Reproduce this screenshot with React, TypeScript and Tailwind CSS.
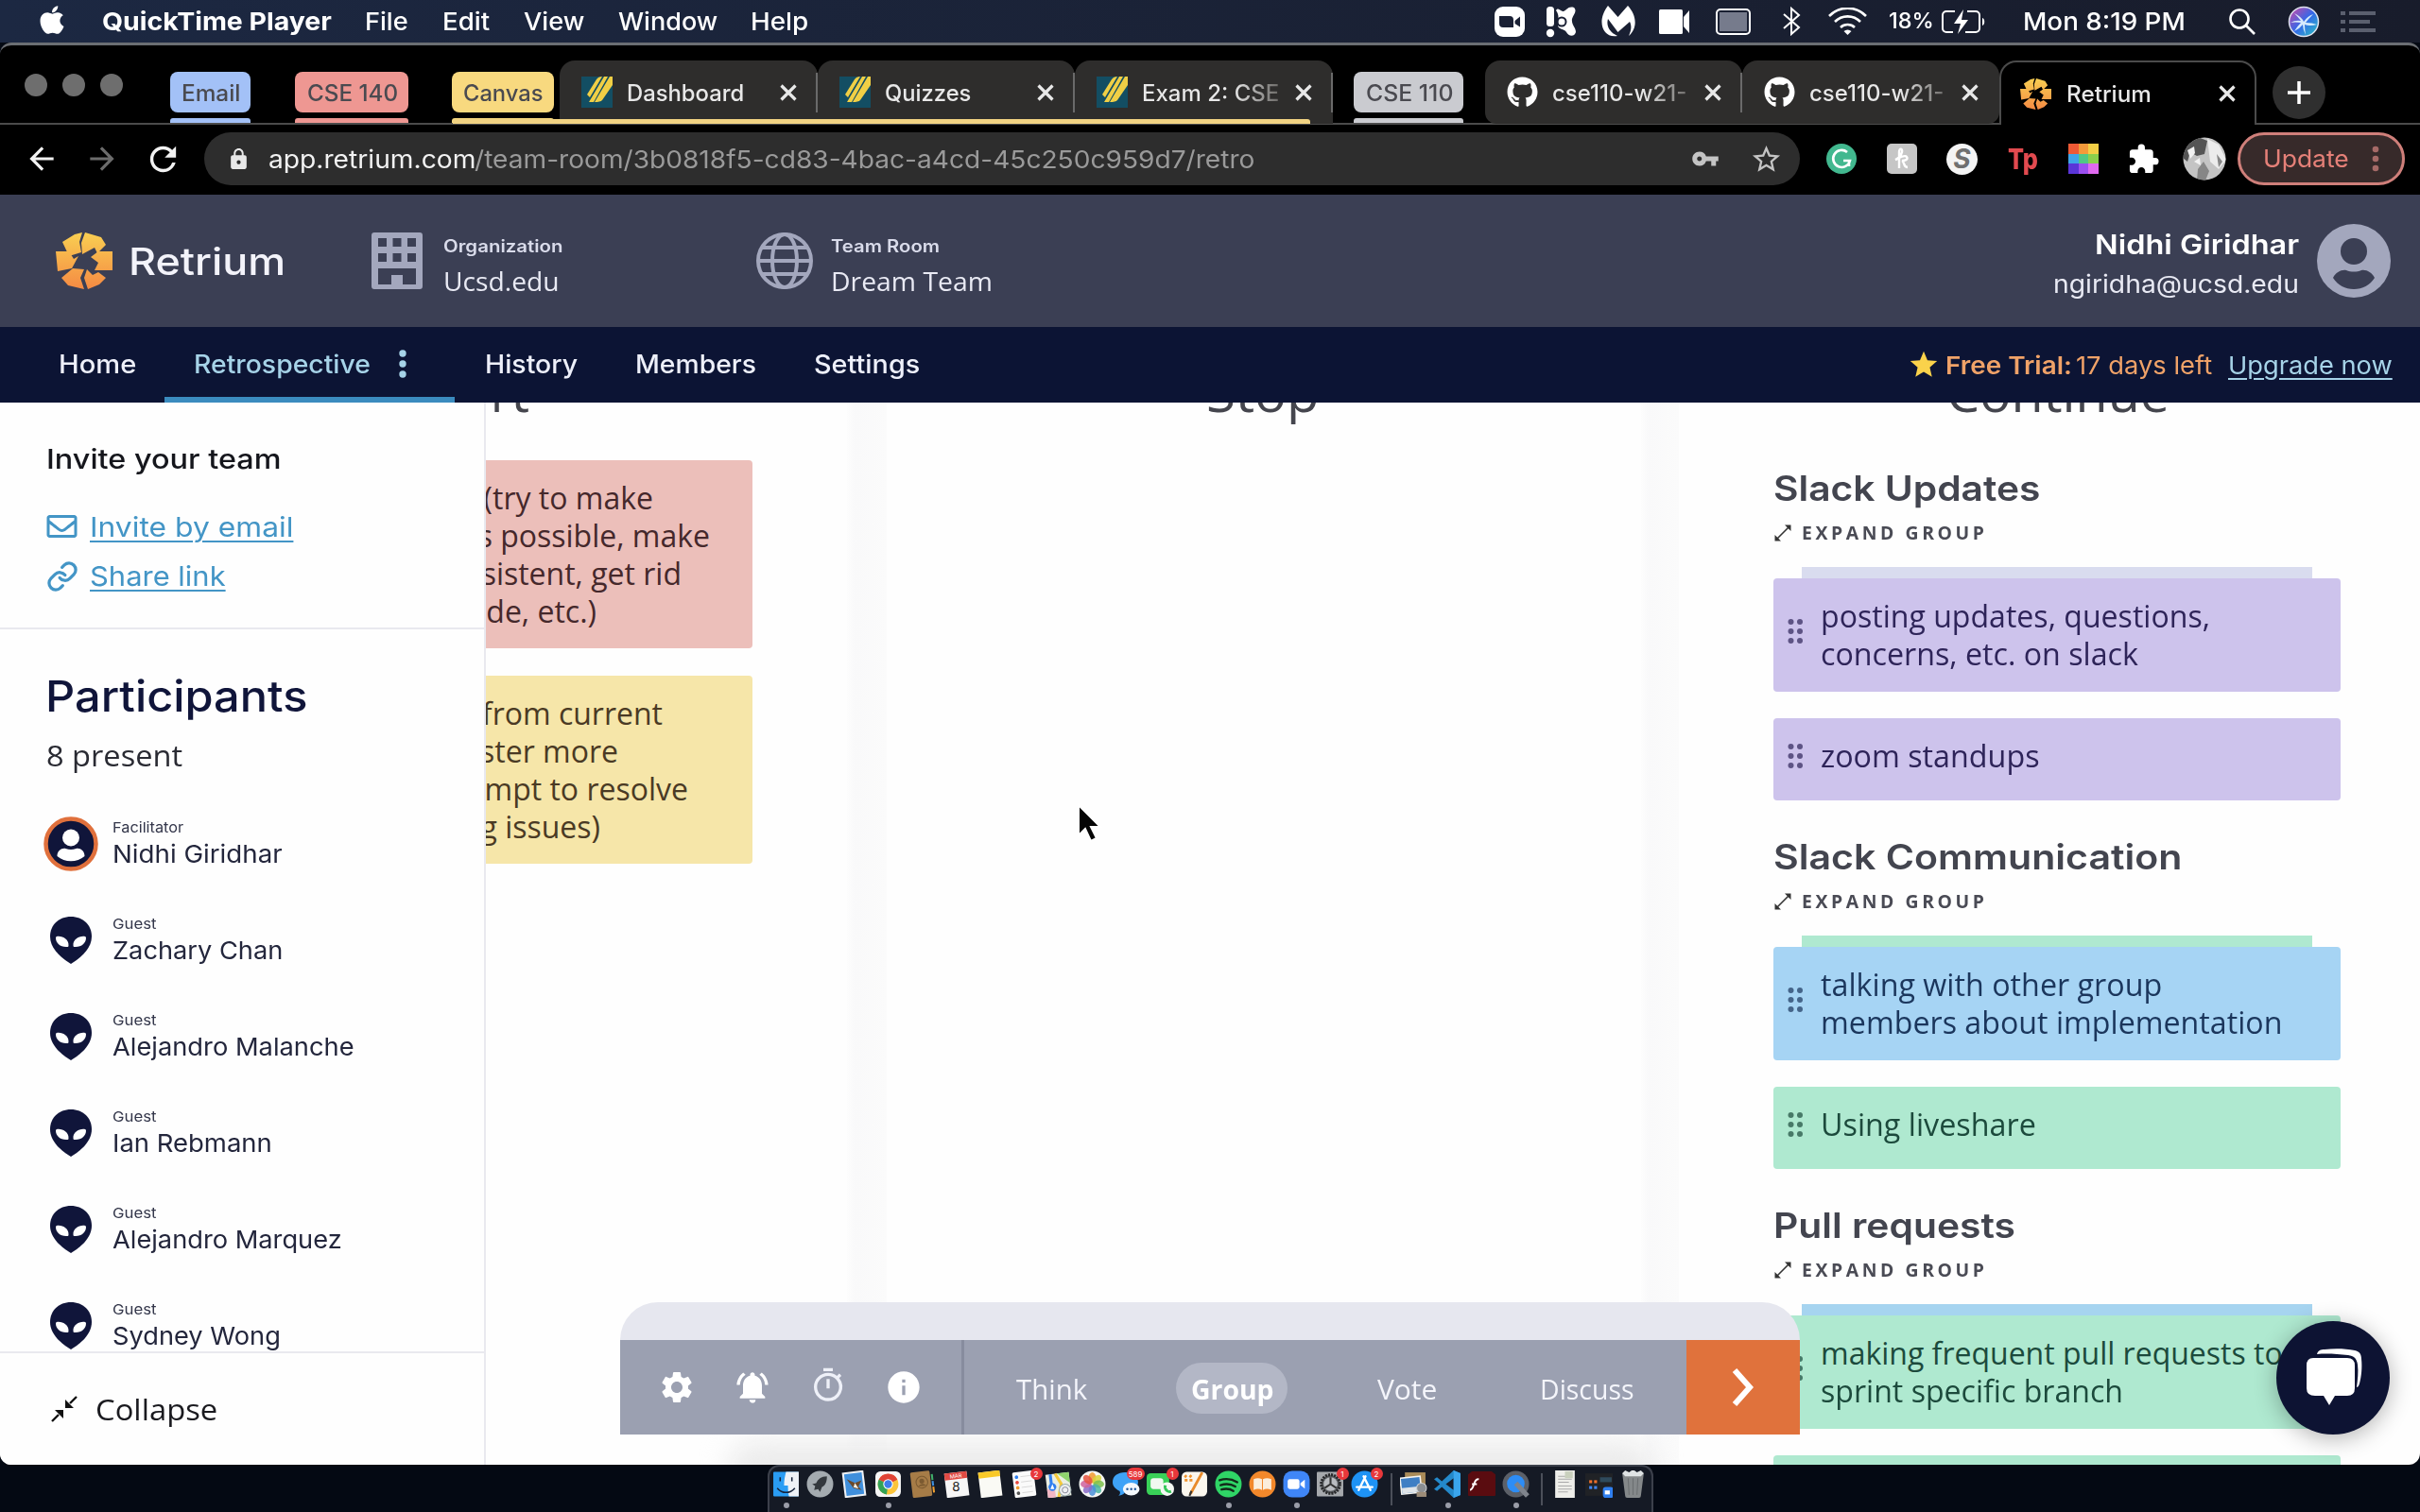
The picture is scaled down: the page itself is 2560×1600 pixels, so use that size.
import { useLayoutEffect, useRef } from "react";
import type { ReactNode } from "react";
import { FaApple, FaGithub, FaRegEnvelope } from "react-icons/fa";
import {
  MdArrowBack,
  MdArrowForward,
  MdExtension,
  MdInfo,
  MdLock,
  MdNotificationsActive,
  MdOutlineTimer,
  MdRefresh,
  MdSettings,
  MdStar,
  MdStarBorder,
  MdVpnKey,
} from "react-icons/md";
import { Link } from "lucide-react";

const INTER = "font-['Inter',sans-serif] [font-optical-sizing:none]";
const OPEN = "font-['Open_Sans',sans-serif]";

/* A single line of text stretched or condensed to fill a given width. */
function Fit({ w, className = "", children }: { w: number; className?: string; children: string }) {
  const ref = useRef<HTMLSpanElement>(null);
  useLayoutEffect(() => {
    const el = ref.current;
    if (!el) return;
    el.style.transform = `scaleX(${(w + 3) / el.offsetWidth})`;
  }, [w, children]);
  return (
    <span className="inline-block shrink-0" style={{ width: w + 2 }}>
      <span ref={ref} className={`inline-block origin-left whitespace-nowrap ${className}`}>
        {children}
      </span>
    </span>
  );
}

/* ---------- macOS menu bar ---------- */

function MenuBar() {
  return (
    <div className={`flex h-[45px] shrink-0 items-center bg-linear-to-r from-[#1c2842] to-[#181c2b] text-[26px] font-medium text-white ${INTER}`}>
      <FaApple className="-mt-1 ml-[38px] size-[34px]" />
      <div className="ml-[36px] w-[278px]"><Fit w={240} className="font-bold">QuickTime Player</Fit></div>
      <div className="w-[82px]"><Fit w={43}>File</Fit></div>
      <div className="w-[86px]"><Fit w={47}>Edit</Fit></div>
      <div className="w-[100px]"><Fit w={61}>View</Fit></div>
      <div className="w-[140px]"><Fit w={102}>Window</Fit></div>
      <div className="w-[787px]"><Fit w={58}>Help</Fit></div>
      <svg className="h-8 w-8" viewBox="0 0 32 32">
        <rect width="32" height="32" rx="9" fill="#fff" />
        <path d="M5 10h11a4 4 0 0 1 4 4v8H9a4 4 0 0 1-4-4zM21.500 15l5.500-4.500v11L21.500 18z" fill="#1a2034" />
      </svg>
      <svg className="ml-[22px] h-[34px] w-[33px]" viewBox="0 0 33 34" fill="#fff">
        <rect x="1" y="1" width="8" height="21" rx="3.500" />
        <circle cx="5" cy="29" r="4.200" />
        <path d="M11 5c3-4 5 2 8 1s5-6 11-4c4 4-1 8-2 12-1 6 4 9 4 14-2 6-8 4-10 0s-9-2-9-8 2-9-2-15z" />
        <circle cx="17" cy="17" r="4.500" fill="none" stroke="#1a2034" strokeWidth="2" />
      </svg>
      <svg className="ml-[25px] h-[33px] w-[37px]" viewBox="0 0 37 33" fill="#fff">
        <path d="M8 0 18.500 12 29 0c9 10 11 23 1 32 3-7 3-11 1-15L18.500 28 8 14c-2 7 1 14 10 18C3 35-5 17 8 0z" />
      </svg>
      <svg className="ml-[25px] h-[26px] w-[33px]" viewBox="0 0 33 26" fill="#fff">
        <rect width="25" height="26" rx="1.500" />
        <path d="M26 8l6-7v24l-6-7z" />
      </svg>
      <div className="ml-[27px] flex h-[28px] w-[37px] rounded-[5px] border-2 border-white p-[2px]">
        <div className="flex-1 bg-[#767b8c]" />
      </div>
      <svg className="ml-[33px] h-[31px] w-[21px]" viewBox="0 0 21 31" fill="none" stroke="#fff" strokeWidth="2">
        <path d="M2 8l16 14-8 7V2l8 7L2 23" />
      </svg>
      <svg className="ml-[28px] h-[30px] w-[41px]" viewBox="0 0 41 30" fill="none" stroke="#fff" strokeWidth="2.600">
        <path d="M1 9a27 27 0 0 1 39 0M7 15a19 19 0 0 1 27 0M13 21a11 11 0 0 1 15 0" />
        <path d="M16.500 25a6 6 0 0 1 8 0l-4 4z" fill="#fff" stroke="none" />
      </svg>
      <div className="ml-[23px] w-[56px] text-[23px]"><Fit w={45}>18%</Fit></div>
      <svg className="h-[26px] w-[46px]" viewBox="0 0 46 26" fill="none" stroke="#fff" strokeWidth="2">
        <path d="M14 2H5a4 4 0 0 0-4 4v14a4 4 0 0 0 4 4h7M27 2h9a4 4 0 0 1 4 4v14a4 4 0 0 1-4 4H25" />
        <path d="M23 0 13 15h7l-3 11 11-15h-7z" fill="#fff" stroke="none" />
        <path d="M43 9c3 1 3 7 0 8z" fill="#fff" stroke="none" />
      </svg>
      <div className="ml-[40px] w-[217px]"><Fit w={169}>Mon 8:19 PM</Fit></div>
      <svg className="h-[30px] w-[30px]" viewBox="0 0 30 30" fill="none" stroke="#fff" strokeWidth="2.600">
        <circle cx="12" cy="12" r="9.500" />
        <path d="M19 19l9 9" />
      </svg>
      <svg className="ml-[33px] h-[34px] w-[34px]" viewBox="0 0 34 34">
        <defs>
          <linearGradient id="siri" x1="0" y1="0" x2="1" y2="1">
            <stop offset="0" stopColor="#d946a0" />
            <stop offset=".5" stopColor="#3468e8" />
            <stop offset="1" stopColor="#27c3c0" />
          </linearGradient>
        </defs>
        <circle cx="17" cy="17" r="15.500" fill="url(#siri)" stroke="#dfe3ee" strokeWidth="1.500" />
        <path d="M7 8q8 4 10 9 4-6 10-8-5 5-8 9 7 0 12 2-8 2-13 0 0 5 1 11-3-6-3-11-4 5-9 7 3-5 7-9-6-1-11 0 5-3 11-2-3-4-7-8z" fill="#e8f8ff" opacity=".9" />
      </svg>
      <svg className="ml-[22px] h-[22px] w-[38px]" viewBox="0 0 38 22" fill="#5a5f6e">
        <path d="M0 0h5v4H0zM9 0h28v4H9zM0 9h5v4H0zM9 9h22v4H9zM0 18h5v4H0zM9 18h28v4H9z" />
      </svg>
    </div>
  );
}

/* ---------- browser chrome ---------- */

function CanvasIcon() {
  return (
    <svg className="h-[33px] w-[33px] shrink-0" viewBox="0 0 33 33">
      <rect width="33" height="33" fill="#134e63" />
      <path d="M6 19 16 3q2-3 6-3L9 22zM8 27 24 0h4L13 27zM14 27 30 0h3v9L22 25q-2 2-8 2z" fill="#f0cf45" />
    </svg>
  );
}

/* Petals arranged like a camera shutter. */
function Pinwheel({ className, id }: { className: string; id: string }) {
  return (
    <svg className={className} viewBox="0 0 60 60">
      <defs>
        <linearGradient id={id} x1="0" y1="0" x2="0" y2="60" gradientUnits="userSpaceOnUse">
          <stop offset="0" stopColor="#f9cf52" />
          <stop offset="1" stopColor="#f58a43" />
        </linearGradient>
      </defs>
      <g fill={`url(#${id})`}>
        <path d="M7 10 20 2l8-2-3 10 2 11-13 4z" />
        <path d="M31 0 48 5l5 8-9 9-3-6-13 7-1-12z" />
        <path d="M45 20h15v20H41l4-8-8-6z" />
        <path d="M45 42l8 6-7 7-12 5-4-12 3-9 6 6z" />
        <path d="M30 60 13 56 6 48l12-10 12 1-4 9z" />
        <path d="M0 20h14l5 8 5-3-7 13-15 3z" />
      </g>
    </svg>
  );
}

function CloseX() {
  return (
    <svg className="h-[18px] w-[18px] shrink-0" viewBox="0 0 18 18" stroke="#e8e8e8" strokeWidth="3.200">
      <path d="M1.500 1.500l15 15M16.500 1.500l-15 15" />
    </svg>
  );
}

function Chip({ box, fill, w, children }: { box: string; fill: string; w: number; children: string }) {
  return (
    <div className={`flex h-full shrink-0 flex-col ${box}`}>
      <div className={`mt-[28px] flex h-[44px] items-center justify-center rounded-[8px] pt-[2px] text-[24px] text-[#4a4a50] ${fill}`}>
        <Fit w={w}>{children}</Fit>
      </div>
      <div className={`mt-[6px] h-[5px] rounded-t-[3px] ${fill}`} />
    </div>
  );
}

function Tab({ box, icon, w, title, fade = false, sep = true }: { box: string; icon: ReactNode; w: number; title: string; fade?: boolean; sep?: boolean }) {
  return (
    <div className={`mt-[16px] flex h-[67px] shrink-0 items-center rounded-t-[16px] bg-[#2e2d2c] pl-[23px] ${box}`}>
      {icon}
      <div className={`ml-[15px] flex-1 pt-[2px] text-[24px] ${fade ? "bg-linear-to-r from-[#e8e8e8] from-60% to-[#44423f] bg-clip-text text-transparent" : "text-[#e8e8e8]"}`}>
        {fade ? <span className="whitespace-nowrap">{title}</span> : <Fit w={w}>{title}</Fit>}
      </div>
      <CloseX />
      <div className={`ml-[20px] h-[42px] w-[2px] ${sep ? "bg-[#6a6a6a]" : ""}`} />
    </div>
  );
}

function TabStrip() {
  return (
    <div className={`relative flex h-[84px] shrink-0 border-b-2 border-[#4b4b4b] font-medium ${INTER}`}>
      <div className="mt-[30px] ml-[26px] flex w-[154px] gap-4">
        <div className="size-[24px] rounded-full bg-[#6e6e6e]" />
        <div className="size-[24px] rounded-full bg-[#6e6e6e]" />
        <div className="size-[24px] rounded-full bg-[#6e6e6e]" />
      </div>
      <Chip box="w-[85px]" fill="bg-[#a3c1f7]" w={60}>Email</Chip>
      <Chip box="ml-[47px] w-[120px]" fill="bg-[#ee9792]" w={93}>CSE 140</Chip>
      <Chip box="ml-[46px] w-[108px]" fill="bg-[#f8d97f]" w={82}>Canvas</Chip>
      <Tab box="ml-[6px] w-[273px]" icon={<CanvasIcon />} w={121} title="Dashboard" />
      <Tab box="w-[272px]" icon={<CanvasIcon />} w={88} title="Quizzes" />
      <Tab box="w-[273px]" icon={<CanvasIcon />} w={140} title="Exam 2: CSE" fade />
      <Chip box="ml-[22px] w-[116px]" fill="bg-[#cacbd0]" w={89}>CSE 110</Chip>
      <Tab box="ml-[23px] w-[272px] rounded-bl-[12px]" icon={<FaGithub className="size-[33px] shrink-0 text-white" />} w={142} title="cse110-w21-" fade />
      <Tab box="w-[272px] rounded-br-[12px]" icon={<FaGithub className="size-[33px] shrink-0 text-white" />} w={142} title="cse110-w21-" fade sep={false} />
      <div className="mt-[16px] flex h-[68px] w-[272px] shrink-0 items-center rounded-t-[18px] border-2 border-b-0 border-[#4b4b4b] bg-black pl-[20px]">
        <Pinwheel id="tabwheel" className="size-[33px]" />
        <div className="ml-[16px] w-[161px] pt-[2px] text-[24px] text-[#e8e8e8]"><Fit w={87}>Retrium</Fit></div>
        <CloseX />
      </div>
      <div className="mt-[22px] ml-[17px] flex size-[56px] items-center justify-center rounded-full bg-[#2f2f2f]">
        <svg className="size-[26px]" viewBox="0 0 26 26" stroke="#fff" strokeWidth="3.500"><path d="M13 1v24M1 13h24" /></svg>
      </div>
      {/* coloured line joining the Canvas tab group */}
      <div className="absolute top-[78px] left-[479px] h-[5px] w-[907px] rounded-t-[3px] bg-[#f0d282]" />
    </div>
  );
}

function AddressBar() {
  return (
    <div className={`flex h-[74px] shrink-0 items-center pb-[2px] ${INTER}`}>
      <MdArrowBack className="ml-[25px] size-[38px] text-[#f2f2f2]" />
      <MdArrowForward className="ml-[26px] size-[38px] text-[#6c6c6c]" />
      <MdRefresh className="ml-[25px] size-[41px] text-[#f2f2f2]" />
      <div className="ml-[23px] flex h-[56px] w-[1688px] items-center rounded-full bg-[#2d2d2d] text-[26px]">
        <MdLock className="ml-[24px] size-[25px] text-[#e8e8e8]" />
        <div className="ml-[19px] flex w-[1505px] pt-px whitespace-nowrap">
          <Fit w={216} className="text-[#f2f2f2]">app.retrium.com</Fit>
          <Fit w={822} className="text-[#9a9a9a]">/team-room/3b0818f5-cd83-4bac-a4cd-45c250c959d7/retro</Fit>
        </div>
        <MdVpnKey className="size-[30px] text-[#c4c4c4]" />
        <MdStarBorder className="ml-[32px] size-[35px] text-[#c4c4c4]" />
      </div>
      <svg className="ml-[28px] size-[32px]" viewBox="0 0 32 32" fill="none" stroke="#fff" strokeWidth="2.600">
        <circle cx="16" cy="16" r="16" fill="#42b88f" stroke="none" />
        <path d="M22 9a9 9 0 1 0 3 9h-7M24 18v6" />
      </svg>
      <div className="ml-[32px] flex size-[32px] items-center justify-center rounded-[5px] bg-[#c6c6c6]">
        <svg className="size-[26px]" viewBox="0 0 26 26" fill="none" stroke="#fff" strokeWidth="2.400">
          <path d="M10 23V6c0-5 4-4 3 0s-5 7-7 8c3-1 10-6 12-3s-2 4-5 4c3 1 1 7 6 7" />
        </svg>
      </div>
      <div className="ml-[31px] flex size-[33px] items-center justify-center rounded-full bg-[#f4f4f4] text-[28px] leading-none font-bold text-[#707070] italic">S</div>
      <div className="ml-[32px] w-[64px] text-[30px] leading-none font-extrabold text-[#e24a4f]"><Fit w={29}>Tp</Fit></div>
      <div className="grid size-[32px] grid-cols-3 grid-rows-3">
        <div className="bg-[#ee5a35]" /><div className="bg-[#f39a3a]" /><div className="bg-[#f3cf45]" />
        <div className="bg-[#3fa4e8]" /><div className="bg-[#4fc886]" /><div className="bg-[#8bd04c]" />
        <div className="bg-[#5a35d8]" /><div className="bg-[#9b4ff0]" /><div className="bg-[#e06af0]" />
      </div>
      <MdExtension className="ml-[30px] size-[35px] text-white" />
      <svg className="ml-[24px] size-[46px]" viewBox="0 0 46 46">
        <clipPath id="av"><circle cx="23" cy="23" r="22.500" /></clipPath>
        <g clipPath="url(#av)">
          <rect width="46" height="46" fill="#c4c4c4" />
          <path d="M0 12l16-12 10 4-3 14-8 2-7-4-3 10-5-4z" fill="#555" />
          <path d="M26 2l12 6 8 16-8 10-9-8z" fill="#ececec" />
          <path d="M16 34l6-8 6 10-4 10H15zM36 18l6 8-4 6z" fill="#868686" />
          <path d="M5 14l7-4 1 7-5 6zM12 26l6-4 1 8z" fill="#f2f2f2" />
        </g>
      </svg>
      <div className="ml-[12px] flex h-[56px] w-[177px] items-center rounded-full border-[3px] border-[#cf7f7a] bg-[#372a2a] pl-[24px] text-[25px] text-[#e58078]">
        <div className="w-[115px] pt-[2px]"><Fit w={88}>Update</Fit></div>
        <svg className="h-[28px] w-[8px]" viewBox="0 0 8 28" fill="#a56a67"><circle cx="4" cy="4" r="3.300" /><circle cx="4" cy="14" r="3.300" /><circle cx="4" cy="24" r="3.300" /></svg>
      </div>
    </div>
  );
}

/* ---------- Retrium header and navigation ---------- */

function SiteHeader() {
  return (
    <div className={`flex h-[140px] shrink-0 items-center bg-[#3b3f54] text-[#e9eaf4] ${INTER}`}>
      <Pinwheel id="logowheel" className="ml-[59px] size-[60px]" />
      <div className="ml-[17px] w-[257px] pt-[2px] text-[40px] leading-none font-medium text-[#f3f3fa]"><Fit w={163}>Retrium</Fit></div>
      <svg className="h-[60px] w-[54px]" viewBox="0 0 54 60" fill="#a3a7bd">
        <path fillRule="evenodd" d="M3 0h48q3 0 3 3v54q0 3-3 3H3q-3 0-3-3V3q0-3 3-3zM7 6v9h9V6zM22.500 6v9h9V6zM38 6v9h9V6zM7 22v9h9v-9zM22.500 22v9h9v-9zM38 22v9h9v-9zM7 38v17h14V45h12v10h14V38z" />
      </svg>
      <div className="ml-[22px] w-[330px] pt-[10px]">
        <div className="h-[32px] text-[18px] leading-[32px] font-semibold text-[#d9dbea]"><Fit w={123}>Organization</Fit></div>
        <div className={`h-[40px] text-[28px] leading-[40px] ${OPEN}`}><Fit w={120}>Ucsd.edu</Fit></div>
      </div>
      <svg className="size-[62px]" viewBox="0 0 62 62" fill="none" stroke="#a3a7bd" strokeWidth="4">
        <circle cx="31" cy="31" r="28" />
        <ellipse cx="31" cy="31" rx="13" ry="28" />
        <path d="M3 31h56M7 17h48M7 45h48" />
      </svg>
      <div className="ml-[18px] pt-[10px]">
        <div className="h-[32px] text-[18px] leading-[32px] font-semibold text-[#d9dbea]"><Fit w={112}>Team Room</Fit></div>
        <div className={`h-[40px] text-[28px] leading-[40px] ${OPEN}`}><Fit w={168}>Dream Team</Fit></div>
      </div>
      <div className="mr-[20px] ml-auto flex flex-col items-end pt-[6px]">
        <div className="h-[43px] text-[29px] leading-[43px] font-semibold text-white"><Fit w={213}>Nidhi Giridhar</Fit></div>
        <div className="h-[42px] text-[26px] leading-[42px]"><Fit w={257}>ngiridha@ucsd.edu</Fit></div>
      </div>
      <svg className="mr-[31px] size-[78px]" viewBox="0 0 78 78">
        <circle cx="39" cy="39" r="39" fill="#a3a7bd" />
        <circle cx="39" cy="29" r="14" fill="#3b3f54" />
        <path d="M17 57c3-6 9-9 14-8 5 2 11 2 16 0 5-1 11 2 14 8-5 8-13 12-22 12s-17-4-22-12z" fill="#3b3f54" />
      </svg>
    </div>
  );
}

function Nav() {
  return (
    <div className={`flex h-[80px] shrink-0 bg-[#0c1434] text-[27px] leading-[79px] font-medium text-[#eef0fa] ${INTER}`}>
      <div className="ml-[62px] w-[112px]"><Fit w={79}>Home</Fit></div>
      <div className="flex h-[80px] w-[307px] items-start border-b-[6px] border-[#3b8bbe] pl-[31px] text-[#a6d3e8]">
        <Fit w={184}>Retrospective</Fit>
        <svg className="mt-[24px] ml-[31px] h-[30px] w-[8px]" viewBox="0 0 8 30" fill="#a6d3e8"><circle cx="4" cy="4" r="3.700" /><circle cx="4" cy="15" r="3.700" /><circle cx="4" cy="26" r="3.700" /></svg>
      </div>
      <div className="ml-[32px] w-[159px]"><Fit w={95}>History</Fit></div>
      <div className="w-[189px]"><Fit w={125}>Members</Fit></div>
      <div><Fit w={109}>Settings</Fit></div>
      <div className="ml-auto flex items-center text-[26px] leading-[81px]">
        <MdStar className="mr-[6px] size-[34px] text-[#fad24b]" />
        <Fit w={131} className="font-semibold text-[#f0a268]">Free Trial:</Fit>
        <div className="ml-[5px] text-[#f0a268]"><Fit w={141} className="font-normal">17 days left</Fit></div>
        <div className="mr-[30px] ml-[18px] text-[#a6d3e8]"><Fit w={171} className="font-normal underline decoration-2 underline-offset-4">Upgrade now</Fit></div>
      </div>
    </div>
  );
}

/* ---------- sidebar ---------- */

function Alien() {
  return (
    <svg className="h-[50px] w-[44px]" viewBox="0 0 44 50">
      <path d="M22 0c13 0 22 9 22 21 0 13-12 23-22 29C12 44 0 34 0 21 0 9 9 0 22 0z" fill="#10153a" />
      <path d="M7 21c6-1 13 3 12.500 9.500 0 1-.5 1.500-1.500 1.500C11 32.500 6 28 6 22.500q0-1.200 1-1.500zM37 21c-6-1-13 3-12.500 9.500 0 1 .5 1.500 1.500 1.500 7 .5 12-4 12-9.500q0-1.200-1-1.500z" fill="#fff" />
    </svg>
  );
}

function FacilitatorAvatar() {
  return (
    <svg className="size-[58px]" viewBox="0 0 58 58">
      <circle cx="29" cy="29" r="26.500" fill="#10153a" stroke="#e0703c" strokeWidth="4.500" />
      <circle cx="29" cy="22.500" r="9" fill="#fff" />
      <path d="M14.500 42c0-6 5-9 9-8q5.500 2 11 0c4-1 9 2 9 8-8 7-21 7-29 0z" fill="#fff" />
    </svg>
  );
}

const guests: { name: string; w: number }[] = [
  { name: "Zachary Chan", w: 177 },
  { name: "Alejandro Malanche", w: 253 },
  { name: "Ian Rebmann", w: 166 },
  { name: "Alejandro Marquez", w: 240 },
  { name: "Sydney Wong", w: 175 },
];

function Person({ icon, role, roleW, name, w }: { icon: ReactNode; role: string; roleW: number; name: string; w: number }) {
  return (
    <div className={`flex h-[102px] shrink-0 items-center ${INTER}`}>
      <div className="ml-[46px] flex w-[58px] justify-center">{icon}</div>
      <div className="ml-[15px] pt-px">
        <div className="h-[20px] text-[15px] leading-[20px] text-[#33364a]"><Fit w={roleW}>{role}</Fit></div>
        <div className="h-[36px] text-[26px] leading-[36px] text-[#23263c]"><Fit w={w}>{name}</Fit></div>
      </div>
    </div>
  );
}

function Sidebar() {
  return (
    <div className="flex w-[514px] shrink-0 flex-col border-r-2 border-[#e9e9ef] bg-[#fefefe]">
      <div className={`h-[240px] shrink-0 border-b-2 border-[#e9e9ef] pt-[40px] pl-[49px] ${INTER}`}>
        <div className="h-[40px] text-[29px] leading-[40px] font-medium text-[#15161c]"><Fit w={245}>Invite your team</Fit></div>
        <div className="mt-[26px] flex h-[52px] items-center text-[29px] text-[#4395c6]">
          <FaRegEnvelope className="-mt-[2px] h-[32px] w-[33px]" />
          <div className="ml-[13px]"><Fit w={212} className="underline decoration-2 underline-offset-4">Invite by email</Fit></div>
        </div>
        <div className="flex h-[52px] items-center text-[29px] text-[#4395c6]">
          <Link className="size-[34px]" strokeWidth={2.3} />
          <div className="ml-[12px]"><Fit w={141} className="underline decoration-2 underline-offset-4">Share link</Fit></div>
        </div>
      </div>
      <div className="flex min-h-0 flex-1 flex-col overflow-hidden">
        <div className={`mt-[41px] h-[60px] shrink-0 pl-[48px] text-[45px] leading-[60px] font-medium text-[#10153a] ${INTER}`}><Fit w={274}>Participants</Fit></div>
        <div className={`mt-[12px] mb-[23px] h-[40px] shrink-0 pl-[49px] text-[31px] leading-[40px] text-[#2a2b33] ${OPEN}`}><Fit w={141}>8 present</Fit></div>
        <Person icon={<FacilitatorAvatar />} role="Facilitator" roleW={72} name="Nidhi Giridhar" w={177} />
        {guests.map((g) => (
          <Person key={g.name} icon={<Alien />} role="Guest" roleW={44} name={g.name} w={g.w} />
        ))}
      </div>
      <div className={`flex h-[120px] shrink-0 items-center border-t-2 border-[#e9e9ef] bg-[#fefefe] text-[31px] text-[#1a1a1f] ${OPEN}`}>
        <svg className="ml-[54px] h-[28px] w-[28px]" viewBox="0 0 28 28" fill="#111" stroke="#111" strokeWidth="2.400">
          <path d="M1 27l7-7M27 1l-7 7" />
          <path d="M4 15h9v9zM24 13h-9V4z" stroke="none" />
        </svg>
        <div className="ml-[19px]"><Fit w={126}>Collapse</Fit></div>
      </div>
    </div>
  );
}

/* ---------- board ---------- */

function DragDots() {
  return (
    <svg className="h-[28px] w-[17px]" viewBox="0 0 17 28" fill="currentColor" opacity=".7">
      <circle cx="3.500" cy="4" r="3" /><circle cx="13" cy="4" r="3" />
      <circle cx="3.500" cy="14" r="3" /><circle cx="13" cy="14" r="3" />
      <circle cx="3.500" cy="24" r="3" /><circle cx="13" cy="24" r="3" />
    </svg>
  );
}

function Note({ tone, lines }: { tone: string; lines: { text: string; w: number }[] }) {
  return (
    <div className={`flex items-center rounded-[4px] ${lines.length > 1 ? "h-[120px]" : "h-[87px]"} ${tone}`}>
      <div className="-mt-[8px] ml-[15px]"><DragDots /></div>
      <div className={`ml-[18px] text-[32px] leading-[40px] ${lines.length > 1 ? "" : "-mt-[7px]"} ${OPEN}`}>
        {lines.map((l) => (
          <div key={l.text} className="h-[40px]"><Fit w={l.w}>{l.text}</Fit></div>
        ))}
      </div>
    </div>
  );
}

function GroupTitle({ w, children }: { w: number; children: string }) {
  return (
    <div>
      <div className={`h-[50px] text-[37px] leading-[51px] font-semibold text-[#43454f] ${INTER}`}><Fit w={w}>{children}</Fit></div>
      <div className={`mt-[8px] flex h-[30px] items-center text-[19px] font-bold tracking-[3.500px] text-[#4a4b55] ${OPEN}`}>
        <svg className="h-[20px] w-[20px]" viewBox="0 0 20 20" fill="#333" stroke="#333" strokeWidth="1.600">
          <path d="M3 17 17 3" />
          <path d="M12 1.500h6.500V8zM1.500 12v6.500H8z" stroke="none" />
        </svg>
        <div className="ml-[10px]"><Fit w={194}>EXPAND GROUP</Fit></div>
      </div>
    </div>
  );
}

const PURPLE = "bg-[#cdc3ec] text-[#2e2459]";
const BLUE = "bg-[#a6d4f4] text-[#1b365c]";
const GREEN = "bg-[#afe9d0] text-[#1c4a3c]";

function ColumnTitle({ children, className }: { children: ReactNode; className: string }) {
  return <div className={`-mt-[47px] flex h-[71px] text-[54px] leading-[72px] text-[#45464e] ${OPEN} ${className}`}>{children}</div>;
}

function ClippedCard({ tone, lines }: { tone: string; lines: { text: string; pad: string }[] }) {
  return (
    <div className={`h-[199px] w-[282px] overflow-hidden rounded-r-[4px] pt-[20px] text-[32px] leading-[40px] ${tone} ${OPEN}`}>
      {lines.map((l) => (
        <div key={l.text} className={`flex h-[40px] justify-end whitespace-nowrap ${l.pad}`}>{l.text}</div>
      ))}
    </div>
  );
}

function ActionBar() {
  return (
    <div className="absolute top-[952px] left-[142px] flex h-[140px] w-[1248px] flex-col">
      <div className="h-[40px] rounded-t-[40px] bg-[#e6e7ef]" />
      <div className={`flex h-[100px] items-center bg-[#9ba0b1] text-[29px] text-[#f4f5fb] ${OPEN}`}>
        <MdSettings className="ml-[40px] size-[40px] text-white" />
        <MdNotificationsActive className="ml-[40px] size-[40px] text-white" />
        <MdOutlineTimer className="mt-[-4px] ml-[40px] size-[40px] text-[#eef0f8]" />
        <MdInfo className="ml-[40px] size-[40px] text-white" />
        <div className="ml-[41px] h-full w-[3px] bg-[#878c9e]" />
        <div className="ml-[55px] w-[169px] pt-[3px]"><Fit w={72}>Think</Fit></div>
        <div className="mt-px flex h-[54px] w-[118px] items-center justify-center rounded-full bg-[#b3b7c6] pt-[2px] font-bold text-white"><Fit w={85}>Group</Fit></div>
        <div className="ml-[95px] w-[172px] pt-[3px]"><Fit w={60}>Vote</Fit></div>
        <div className="w-[155px] pt-[3px]"><Fit w={97}>Discuss</Fit></div>
        <div className="flex h-full flex-1 items-center justify-center bg-[#e0723c]">
          <svg className="h-[42px] w-[28px]" viewBox="0 0 28 42" fill="none" stroke="#fff" strokeWidth="6"><path d="M5 3l16 18L5 39" /></svg>
        </div>
      </div>
    </div>
  );
}

function Board() {
  return (
    <div className="relative flex flex-1 overflow-hidden bg-[#fefefe]">
      <div className="w-[382px]">
        <ColumnTitle className="justify-end pr-[336px]">rt</ColumnTitle>
        <div className="mt-[37px] flex flex-col gap-[29px]">
          <ClippedCard
            tone="bg-[#ecbfba] text-[#45282b]"
            lines={[
              { text: "(try to make", pad: "pr-[105px]" },
              { text: "s possible, make", pad: "pr-[45px]" },
              { text: "sistent, get rid", pad: "pr-[75px]" },
              { text: "de, etc.)", pad: "pr-[165px]" },
            ]}
          />
          <ClippedCard
            tone="bg-[#f6e6a9] text-[#4a3a24]"
            lines={[
              { text: "from current", pad: "pr-[95px]" },
              { text: "ster more", pad: "pr-[142px]" },
              { text: "mpt to resolve", pad: "pr-[68px]" },
              { text: "g issues)", pad: "pr-[161px]" },
            ]}
          />
        </div>
      </div>
      <div className="w-[42px] bg-linear-to-r from-[#fdfdfd] via-[#f9f9fa] via-20% to-[#fbfbfb]" />
      <div className="w-[798px]">
        <ColumnTitle className="pl-[338px]"><Fit w={116}>Stop</Fit></ColumnTitle>
      </div>
      <div className="w-[40px] bg-linear-to-r from-[#fdfdfd] via-[#f9f9fa] via-20% to-[#fbfbfb]" />
      <div className="w-[700px] pl-[100px]">
        <ColumnTitle className="pl-[183px]"><Fit w={233}>Continue</Fit></ColumnTitle>
        <div className="mt-[41px] h-[390px]">
          <GroupTitle w={280}>Slack Updates</GroupTitle>
          <div className="mx-[30px] mt-[21px] h-[12px] bg-[#d9dcef]" />
          <Note tone={PURPLE} lines={[{ text: "posting updates, questions,", w: 409 }, { text: "concerns, etc. on slack", w: 333 }]} />
          <div className="h-[28px]" />
          <Note tone={PURPLE} lines={[{ text: "zoom standups", w: 229 }]} />
        </div>
        <div className="h-[390px]">
          <GroupTitle w={429}>Slack Communication</GroupTitle>
          <div className="mx-[30px] mt-[21px] h-[12px] bg-[#afe9d0]" />
          <Note tone={BLUE} lines={[{ text: "talking with other group", w: 358 }, { text: "members about implementation", w: 485 }]} />
          <div className="h-[28px]" />
          <Note tone={GREEN} lines={[{ text: "Using liveshare", w: 225 }]} />
        </div>
        <GroupTitle w={253}>Pull requests</GroupTitle>
        <div className="mx-[30px] mt-[21px] h-[12px] bg-[#a6d4f0]" />
        <Note tone={GREEN} lines={[{ text: "making frequent pull requests to", w: 486 }, { text: "sprint specific branch", w: 317 }]} />
        <div className="mt-[28px] h-[20px] rounded-t-[4px] bg-[#afe9d0]" />
      </div>
      <div className="absolute top-[1098px] left-[256px] h-[60px] w-[980px] rounded-[40px] bg-[#ececec] blur-[14px]" />
      <ActionBar />
      <div className="absolute top-[972px] left-[1894px] flex size-[120px] items-center justify-center rounded-full bg-[#0d1333] shadow-[0_4px_24px_rgba(0,0,0,0.3)]">
        <svg className="h-[62px] w-[62px]" viewBox="0 0 62 62" fill="#fff">
          <path d="M10 10h36q8 0 8 8v24q0 8-8 8H33l-6 10-6-10h-9q-9 0-9-8V18q0-8 7-8z" />
          <path d="M14 6c1-4 4-5 8-5 10-1 22-1 32 1 5 1 7 4 7 9 1 9 0 19-2 26-1 3-2 4-3 4 1-8 2-16 1-24-1-7-4-9-10-10-11-1-22-2-33-1z" />
        </svg>
      </div>
      <svg className="absolute top-[424px] left-[625px] h-[42px] w-[27px]" viewBox="0 0 27 42" fill="#050505" stroke="#fff" strokeWidth="2">
        <path d="M2 2v32l7-7 6 13 6-3-6-12h10z" />
      </svg>
    </div>
  );
}

/* ---------- dock ---------- */

function DockItem({ children, dot = false, badge }: { children: ReactNode; dot?: boolean; badge?: string }) {
  return (
    <div className="relative flex w-9 shrink-0 flex-col items-center pt-[4px]">
      <svg className="size-[29px]" viewBox="0 0 28 28">{children}</svg>
      {dot && <div className="mt-[5px] size-[6px] rounded-full bg-[#9a9da8]" />}
      {badge && (
        <div className={`absolute top-[1px] right-[-1px] flex h-[13px] min-w-[13px] items-center justify-center rounded-full bg-[#e8383b] px-[2px] text-[8px] leading-none text-white ${INTER}`}>{badge}</div>
      )}
    </div>
  );
}

const petals: { fill: string; turn: string }[] = [
  { fill: "#f29a2e", turn: "rotate(0 14 14)" },
  { fill: "#d9d53a", turn: "rotate(45 14 14)" },
  { fill: "#7cc04b", turn: "rotate(90 14 14)" },
  { fill: "#4cb6a0", turn: "rotate(135 14 14)" },
  { fill: "#4a8fd8", turn: "rotate(180 14 14)" },
  { fill: "#8b6cc8", turn: "rotate(225 14 14)" },
  { fill: "#d0619c", turn: "rotate(270 14 14)" },
  { fill: "#e8533f", turn: "rotate(315 14 14)" },
];

function Dock() {
  return (
    <div className="flex h-[50px] shrink-0 justify-center bg-[#040913]">
      <div className="flex w-[937px] rounded-t-[12px] border-2 border-b-0 border-[#3c404b] bg-[#151a25]">
        <DockItem dot>
          <rect x="1" y="1.500" width="26" height="25" rx="1" fill="#2a9df4" />
          <path d="M14 1.500h13v25H17c-1-4-1-8-1-11h-4c0-6 1-10 2-14z" fill="#eef2f7" />
          <path d="M8 7v4M20 7v4M5 18c5 6 13 6 18 0" fill="none" stroke="#16243c" strokeWidth="1.500" />
        </DockItem>
        <DockItem>
          <circle cx="14" cy="14" r="13.500" fill="#a4abb0" />
          <path d="M21 6c-6 0-9 3-11 7l-4 1 3 2-1 4 4-1 2 3 2-5c4-2 5-6 5-11z" fill="#33383d" />
        </DockItem>
        <DockItem>
          <g transform="rotate(-7 14 14)"><rect x="3" y="1" width="22" height="26" fill="#eef1f4" /><rect x="5" y="3" width="18" height="22" fill="#3f8fdc" /><path d="M7 8l8 5 7-2-4 6 3 4-8-3-3-5z" fill="#6b4a2c" /><path d="M15 13l3 6-5-2z" fill="#f4f0e4" /></g>
        </DockItem>
        <DockItem dot>
          <rect x="1" y="1" width="26" height="26" rx="5" fill="#f6f6f6" />
          <circle cx="14" cy="14" r="10.500" fill="#fbc43a" />
          <path d="M14 14 4.500 9.500A10.500 10.500 0 0 1 23.500 9.500z" fill="#e04335" />
          <path d="M14 14 4.500 9.500a10.500 10.500 0 0 0 8 15z" fill="#33a356" />
          <circle cx="14" cy="14" r="5" fill="#fff" /><circle cx="14" cy="14" r="4" fill="#3f7de8" />
        </DockItem>
        <DockItem>
          <g transform="rotate(-7 14 14)"><rect x="3" y="1" width="20" height="26" rx="1.500" fill="#a67c47" /><path d="M24 5h2v6h-2z" fill="#3fae6a" /><path d="M24 12h2v5h-2z" fill="#3f8fdc" /><path d="M24 18h2v6h-2z" fill="#f0a030" /><circle cx="14" cy="12" r="6" fill="none" stroke="#7b5a31" /><circle cx="14" cy="11" r="2.500" fill="#7b5a31" /><path d="M10 16c2-3 6-3 8 0z" fill="#7b5a31" /></g>
        </DockItem>
        <DockItem>
          <g transform="rotate(-7 14 14)"><rect x="3" y="2" width="23" height="25" fill="#f6f6f6" /><rect x="3" y="2" width="23" height="7" fill="#e04a43" /><text x="14.500" y="7.700" fontSize="5.500" textAnchor="middle" fill="#fff" fontFamily="Inter">MAR</text></g>
          <text x="14" y="21.500" fontSize="13" textAnchor="middle" fill="#222" fontFamily="Inter">8</text>
        </DockItem>
        <DockItem>
          <g transform="rotate(-7 14 14)"><rect x="3" y="1" width="22" height="26" fill="#fafaf5" /><rect x="3" y="1" width="22" height="6" fill="#f9c928" /></g>
        </DockItem>
        <DockItem badge="2">
          <g transform="rotate(-7 14 14)"><rect x="3" y="1" width="22" height="26" rx="1.500" fill="#fafafa" /><circle cx="7" cy="6" r="1.800" fill="#2f7ff0" /><circle cx="7" cy="11.500" r="1.800" fill="#e8463c" /><circle cx="7" cy="17" r="1.800" fill="#f09a2e" /><circle cx="7" cy="22.500" r="1.800" fill="#555" /><path d="M11 6h11M11 11.500h11M11 17h11M11 22.500h11" stroke="#d5d5d5" strokeWidth=".8" /></g>
        </DockItem>
        <DockItem>
          <g transform="rotate(-7 14 14)"><rect x="2" y="3" width="24" height="24" fill="#e9eee2" /><path d="M14 3h12v11z" fill="#8fd36e" /><path d="M2 18h8v9H2z" fill="#f2b6c4" /><path d="M12 3l5 11-4 13" fill="none" stroke="#f4c93c" strokeWidth="3" /><path d="M7 3v16" stroke="#2f7ff0" strokeWidth="3" /></g>
          <circle cx="8" cy="17" r="4" fill="#2f7ff0" /><path d="M6 19l2-5 2 5z" fill="#fff" />
          <circle cx="21" cy="20" r="6" fill="#eef0f2" stroke="#9aa" /><circle cx="21" cy="20" r="3" fill="none" stroke="#778" strokeWidth=".8" />
        </DockItem>
        <DockItem>
          <circle cx="14" cy="14" r="13.500" fill="#f6f6f4" />
          {petals.map((p) => (
            <ellipse key={p.turn} cx="14" cy="7.500" rx="3.800" ry="5.500" fill={p.fill} opacity=".85" transform={p.turn} />
          ))}
        </DockItem>
        <DockItem badge="589">
          <path d="M13 2c8 0 13 5 13 10S21 22 13 22c-2 3-4 3-7 4 2-2 2-4 1-5C3 19 0 16 0 12 0 6 5 2 13 2z" fill="#3ea2f7" />
          <ellipse cx="19" cy="19" rx="8.500" ry="6.500" fill="#f4f8fc" />
          <circle cx="15" cy="19" r="1.200" fill="#245a9c" /><circle cx="19" cy="19" r="1.200" fill="#245a9c" /><circle cx="23" cy="19" r="1.200" fill="#245a9c" />
        </DockItem>
        <DockItem badge="1">
          <rect x="0" y="3" width="23" height="22" rx="4" fill="#39d158" /><rect x="4" y="8" width="13" height="11" rx="3" fill="#f0f8f0" />
          <circle cx="21" cy="19" r="7" fill="#f4f8f4" /><path d="M17.500 15c-1 5 3 9 8 8l-1-3-2 .5-2.500-3 .5-2z" fill="#34c759" />
        </DockItem>
        <DockItem>
          <rect x="1" y="1.500" width="26" height="25" rx="5" fill="#fbf7ef" />
          <path d="M4 10h3M9 10h3M4 7l2-2M9 7l2-2" stroke="#f0932e" strokeWidth="2.500" />
          <path d="M22 2 10 24" stroke="#e88a2a" strokeWidth="2.800" /><path d="M11 21l-2 5" stroke="#333" strokeWidth="2" />
        </DockItem>
        <DockItem dot>
          <circle cx="14" cy="14" r="13.500" fill="#2fd566" />
          <path d="M5 10c6-2 13-1 18 2M6 15c5-1.500 11-1 15 1.500M7 19.500c4-1 9-.5 12 1.500" fill="none" stroke="#132a1a" strokeWidth="2.300" strokeLinecap="round" />
        </DockItem>
        <DockItem>
          <circle cx="14" cy="14" r="13.500" fill="#f2882b" />
          <path d="M5 9c3-1.500 6-1.500 8.500 0v11c-2.500-1.500-5.500-1.500-8.500 0zM14.500 9C17 7.500 20 7.500 23 9v11c-3-1.500-6-1.500-8.500 0z" fill="#fbeedd" />
        </DockItem>
        <DockItem dot>
          <rect x=".5" y=".5" width="27" height="27" rx="9" fill="#3f86f7" />
          <rect x="5" y="9" width="12" height="10" rx="2" fill="#fff" /><path d="M18 13l4.500-3.500v9L18 15z" fill="#fff" />
        </DockItem>
        <DockItem badge="1">
          <rect x="0" y="1.500" width="27" height="25" rx="1" fill="#a6a9ad" />
          <circle cx="14" cy="14" r="9.500" fill="#5b5e62" stroke="#28292b" strokeWidth="3" strokeDasharray="2 1" />
          <circle cx="14" cy="14" r="7" fill="#b9bcc0" /><path d="M14 14V7M14 14l6 4M14 14l-6 4" stroke="#333" strokeWidth="2" />
        </DockItem>
        <DockItem badge="2">
          <circle cx="14" cy="14" r="13.500" fill="#1e93f5" />
          <path d="M15 6 8 20M13 6l7 14M6 17h16" stroke="#fff" strokeWidth="2.300" strokeLinecap="round" />
        </DockItem>
        <div className="mt-[7px] mr-[5px] ml-[9px] h-[34px] w-[2px] shrink-0 bg-[#4b4f59]" />
        <DockItem>
          <rect x="5" y="2" width="21" height="18" fill="#a98b58" /><g transform="rotate(-6 12 14)"><rect x="0" y="6" width="22" height="18" fill="#f4f4f0" /><rect x="1.500" y="7.500" width="19" height="15" fill="#3f7fc4" /><path d="M1.500 17h19v5.500h-19z" fill="#dfe4e8" /></g>
          <circle cx="22" cy="18" r="5" fill="#8b8f93" stroke="#cfd2d5" /><rect x="17" y="22" width="10" height="5" fill="#9c8c78" />
        </DockItem>
        <DockItem dot>
          <path d="M20 0l7 3v22l-7 3L8 17l-5 4-3-2 6-5-6-5 3-2 5 4z" fill="#2489ca" /><path d="M20 8v12l-8-6z" fill="#151a25" /><path d="M20 0l7 3v22l-7 3z" fill="#3aa5ec" />
        </DockItem>
        <DockItem>
          <path d="M0 4l4-3h20l4 3v21q0 1-1 1H1q-1 0-1-1z" fill="#5a0c10" />
          <path d="M11 9c-6-1-4 10-9 11M4 14h5" fill="none" stroke="#fff" strokeWidth="1.800" />
        </DockItem>
        <DockItem dot>
          <circle cx="14" cy="14" r="13.500" fill="#5c6068" /><circle cx="14" cy="13.500" r="9" fill="#2d8df6" /><path d="M14 13l12 13" stroke="#7f848c" strokeWidth="5" />
        </DockItem>
        <div className="mt-[7px] mr-[6px] ml-[8px] h-[34px] w-[2px] shrink-0 bg-[#4b4f59]" />
        <DockItem>
          <rect x="4" y="-1" width="20" height="29" fill="#eeeeea" /><path d="M7 6h14M7 9h14M7 12h11M7 16h14M7 19h14M7 22h10" stroke="#aaa" strokeWidth="1" /><path d="M14 1h8v7h-8z" fill="#c9d0bd" />
        </DockItem>
        <DockItem>
          <rect x="0" y="3" width="28" height="23" fill="#202226" /><rect x="4" y="10" width="3" height="3" fill="#f0702c" /><rect x="9" y="10" width="3" height="3" fill="#f0702c" /><rect x="4" y="16" width="3" height="3" fill="#3f86f7" /><rect x="9" y="16" width="3" height="3" fill="#3f86f7" /><rect x="15" y="7" width="12" height="5" fill="#2f4a5c" />
          <rect x="18" y="17" width="11" height="11" rx="3" fill="#2f7ff0" /><rect x="20" y="20.500" width="5" height="4" fill="#fff" />
        </DockItem>
        <DockItem>
          <path d="M3 3h22l-3 23q0 2-2 2H8q-2 0-2-2z" fill="#84888a" /><path d="M3 3l3-3 4 2 4-3 4 3 4-2 3 3-3 3H6z" fill="#dfe3e4" /><path d="M9 8l1 17M19 8l-1 17M14 8v17" stroke="#6b6f71" />
        </DockItem>
      </div>
    </div>
  );
}

export default function App() {
  return (
    <div className="flex h-[1600px] w-[2560px] flex-col overflow-hidden bg-[#040913]">
      <MenuBar />
      <div className="flex min-h-0 flex-1 flex-col overflow-hidden rounded-[12px] border-t-[3px] border-[#6b6e73] bg-black">
        <TabStrip />
        <AddressBar />
        <SiteHeader />
        <Nav />
        <div className="flex min-h-0 flex-1">
          <Sidebar />
          <Board />
        </div>
      </div>
      <Dock />
    </div>
  );
}
